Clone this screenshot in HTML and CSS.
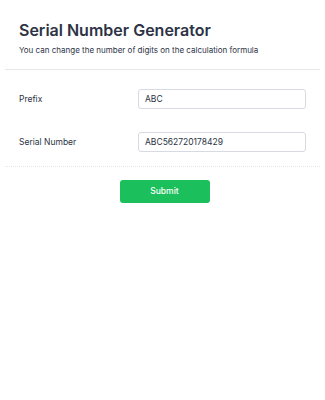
FILE: index.html
```html
<!DOCTYPE html>
<html lang="en">
<head>
  <meta charset="UTF-8">
  <title>Serial Number Generator</title>
  <link rel="stylesheet" href="styles.css">
</head>
<body>
  <div class="form">
    <div class="header">
      <h1>Serial Number Generator</h1>
      <p>You can change the number of digits on the calculation formula</p>
    </div>

    <div class="field">
      <label for="prefix">Prefix</label>
      <input id="prefix" type="text" value="ABC">
    </div>

    <div class="field">
      <label for="serial">Serial Number</label>
      <input id="serial" type="text" value="ABC562720178429">
    </div>

    <div class="actions">
      <button>Submit</button>
    </div>
  </div>
</body>
</html>
```

FILE: styles.css
```css
body {
  margin: 0;
  font-family: Inter, "Noto Sans", sans-serif;
  color: #2c3345;
  background: #fff;
}
.form {
  padding: 0 5px;
}
.header {
  padding: 20px 14px 13px;
  border-bottom: 1px solid #e6e7eb;
}
.header h1 {
  margin: 0;
  font-size: 16px;
  font-weight: 600;
  line-height: 20px;
}
.header p {
  margin: 5px 0 0;
  font-size: 8px;
  line-height: 11px;
}
.field {
  display: flex;
  align-items: center;
  padding: 19px 14px 4px;
}
.field label {
  width: 119px;
  font-size: 8.5px;
}
.field input {
  width: 168px;
  height: 20px;
  box-sizing: border-box;
  border: 1px solid #d8dae3;
  border-radius: 3px;
  padding: 0 6px;
  font-family: inherit;
  font-size: 8.5px;
  color: #2c3345;
}
.actions {
  margin-top: 10px;
  border-top: 1px dotted #e3e5ea;
  padding-top: 11px;
  text-align: center;
}
.actions button {
  width: 90px;
  height: 23px;
  margin-left: 4px;
  border: 0;
  border-radius: 3px;
  background: #1bbf5b;
  color: #fff;
  font-family: inherit;
  font-size: 8.5px;
  font-weight: 500;
}
```
